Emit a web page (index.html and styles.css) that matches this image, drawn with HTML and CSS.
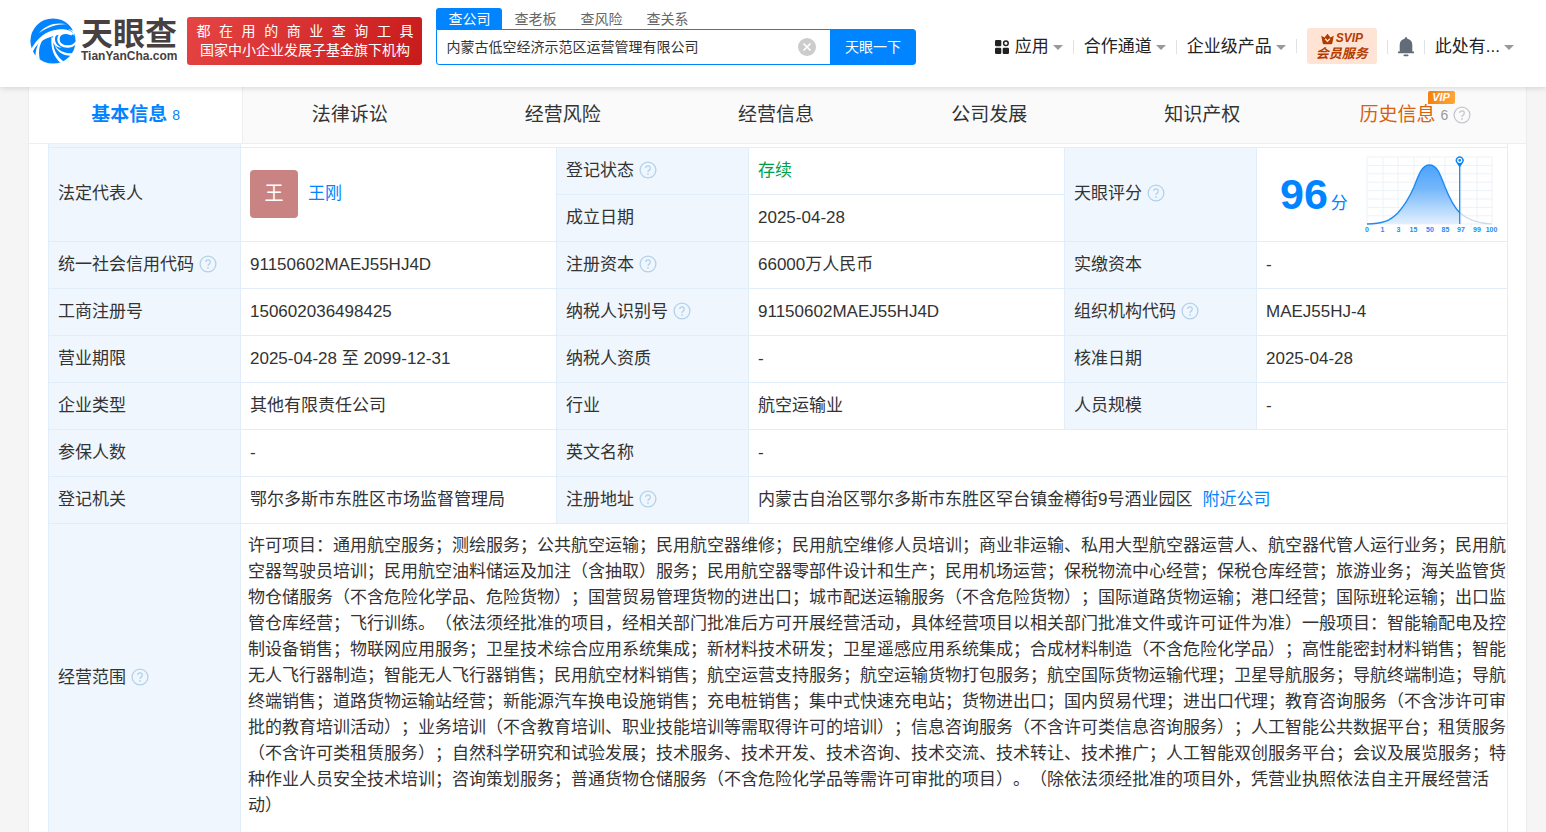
FILE: index.html
```html
<!DOCTYPE html>
<html lang="zh-CN">
<head>
<meta charset="utf-8">
<meta name="viewport" content="width=device-width, initial-scale=1">
<title>天眼查</title>
<link rel="stylesheet" href="styles.css">
</head>
<body>
<svg class="sprite" aria-hidden="true">
  <symbol id="help" viewBox="0 0 18 18">
    <circle cx="9" cy="9" r="7.9" fill="none" stroke="currentColor" stroke-width="1.3"/>
    <path d="M6.7 7.1a2.3 2.3 0 1 1 3.5 2c-.8.5-1.2.9-1.2 1.8" fill="none" stroke="currentColor" stroke-width="1.3"/>
    <circle cx="9" cy="12.9" r=".85" fill="currentColor"/>
  </symbol>
</svg>

<header class="header">
  <a class="brand" href="#" aria-label="天眼查">
    <svg class="brand-mark" viewBox="0 0 46 46" aria-hidden="true">
      <circle cx="23" cy="23" r="22.600" fill="#0084ff"/>
      <path d="M9 15C16 7 25 4 37 6.300 27 5.800 18 9 9 15Z" fill="#fff"/>
      <path d="M0 33C7 20 16 12.500 28 11.500c6-.5 12 0 16 4.500l3-3-6-7 2 7c-1.500-1-3-1.800-5-2 4 2 6 4 6.500 7-3.500-3.500-8-4-12-2C23 18 9 20 2.500 34.500Z" fill="#fff"/>
      <path d="M42 16.500c-6-3.500-13-1.500-13.500 4C28 26 33 29 38.500 28.500c4-.3 6.500-2 8-4.500" fill="none" stroke="#fff" stroke-width="2.400"/>
      <path d="M29 15c-2.500 1.500-4 3-4 6 0 4 3 7.500 7 8.500-5 .5-9.500-3-9.500-8.500 0-3 1.500-5 3.500-6.500Z" fill="#fff"/>
      <path d="M23.500 20c-1 9.500 2 17 10 23.500l-3 1.300C23.500 39 20.500 30 21.500 19Z" fill="#fff"/>
      <path d="M24.500 26.500c3.500 6 9 9 18 8.800l-1.600 2.500C32.500 37.500 26.500 33.500 24.500 26.500Z" fill="#fff"/>
      <path d="M16 17.500C9.500 24.500 8 32 9.800 41.500L5.500 38C5.500 29 9.500 22 16 17.500Z" fill="#fff"/>
    </svg>
    <span class="brand-text">
      <span class="brand-name">天眼查</span>
      <span class="brand-domain">TianYanCha.com</span>
    </span>
  </a>
  <div class="slogan">
    <span class="slogan-spread">都 在 用 的 商 业 查 询 工 具</span>
    <span>国家中小企业发展子基金旗下机构</span>
  </div>
  <form class="search">
    <div class="search-tabs">
      <button type="button" class="search-tab is-active">查公司</button>
      <button type="button" class="search-tab">查老板</button>
      <button type="button" class="search-tab">查风险</button>
      <button type="button" class="search-tab">查关系</button>
    </div>
    <div class="search-bar">
      <input class="search-input" type="text" aria-label="搜索公司" value="内蒙古低空经济示范区运营管理有限公司">
      <button type="button" class="search-clear" aria-label="清空">
        <svg viewBox="0 0 18 18" aria-hidden="true"><circle cx="9" cy="9" r="9" fill="#ccc"/><path d="M5.500 5.500l7 7M12.500 5.500l-7 7" stroke="#fff" stroke-width="1.700"/></svg>
      </button>
      <button type="button" class="search-submit">天眼一下</button>
    </div>
  </form>
  <nav class="menu">
    <a class="menu-item" href="#">
      <svg class="apps-icon" viewBox="0 0 14 14" aria-hidden="true"><rect width="6.300" height="6.300" rx="1.200" fill="#222"/><rect y="7.700" width="6.300" height="6.300" rx="1.200" fill="#222"/><rect x="7.700" y="7.700" width="6.300" height="6.300" rx="1.200" fill="#222"/><circle cx="10.900" cy="3.200" r="2.300" fill="none" stroke="#222" stroke-width="1.500"/></svg>
      <span>应用</span><i class="caret"></i>
    </a>
    <a class="menu-item" href="#"><span>合作通道</span><i class="caret"></i></a>
    <a class="menu-item" href="#"><span>企业级产品</span><i class="caret"></i></a>
    <a class="menu-item" href="#">
      <span class="svip">
        <span class="svip-top">
          <svg class="crown" viewBox="0 0 14 12" aria-hidden="true"><path d="M.3 2.500 3.800 4.300 7 .3l3.200 4 3.500-1.800-1.500 8q-.2 1.200-1.300 1.200H3.100q-1.100 0-1.300-1.200Z" fill="#b23c00"/><path d="M4.500 5.800 7 8.500l2.500-2.700" fill="none" stroke="#ffe3d4" stroke-width="1.500"/></svg>
          <span>SVIP</span>
        </span>
        <span>会员服务</span>
      </span>
    </a>
    <a class="menu-item" href="#" aria-label="消息">
      <svg class="bell" viewBox="0 0 16 20" aria-hidden="true"><path d="M8 .3c.8 0 1.300.5 1.300 1.400 3 .6 5 2.900 5 6V14.500H16v1.800H0v-1.800H1.700V7.700c0-3.100 2-5.400 5-6C6.700.8 7.200.3 8 .3Z" fill="#626b78"/><rect x="5.500" y="17.600" width="5" height="1.700" rx=".8" fill="#626b78"/></svg>
    </a>
    <a class="menu-item" href="#"><span>此处有...</span><i class="caret"></i></a>
  </nav>
</header>

<main class="page">
  <nav class="tabs">
    <a class="tab is-active" href="#">基本信息<span class="count">8</span></a>
    <a class="tab" href="#">法律诉讼</a>
    <a class="tab" href="#">经营风险</a>
    <a class="tab" href="#">经营信息</a>
    <a class="tab" href="#">公司发展</a>
    <a class="tab" href="#">知识产权</a>
    <a class="tab is-history" href="#">
      <span class="history-label">历史信息<span class="vip">VIP</span></span><span class="count">6</span>
      <svg class="help" aria-hidden="true"><use href="#help"/></svg>
    </a>
  </nav>

  <table class="info">
    <colgroup>
      <col class="col-label"><col class="col-value"><col class="col-label"><col class="col-value"><col class="col-label"><col class="col-last">
    </colgroup>
    <tbody>
      <tr class="lead" aria-hidden="true"><th></th><td colspan="5"></td></tr>
      <tr>
        <th rowspan="2" scope="row">法定代表人</th>
        <td rowspan="2"><div class="person"><span class="avatar">王</span><a class="link" href="#">王刚</a></div></td>
        <th scope="row">登记状态<svg class="help" aria-hidden="true"><use href="#help"/></svg></th>
        <td class="status">存续</td>
        <th rowspan="2" scope="row">天眼评分<svg class="help" aria-hidden="true"><use href="#help"/></svg></th>
        <td rowspan="2">
          <div class="score">
            <span class="score-value"><b>96</b>分</span>
            <svg class="chart" viewBox="0 0 136 84" role="img" aria-label="评分分布">
              <defs><linearGradient id="fill" x1="0" y1="0" x2="0" y2="1"><stop offset="0" stop-color="#4aa3fb"/><stop offset=".4" stop-color="#74b7fb"/><stop offset="1" stop-color="#e3f0fd"/></linearGradient></defs>
              <path d="M5 5H130M5 13.400H130M5 21.800H130M5 30.200H130M5 38.600H130M5 47H130M5 55.400H130M5 63.800H130M5 72H130M5 5V72M21 5V72M36 5V72M52 5V72M67.500 5V72M83 5V72M99 5V72M115 5V72M130 5V72" stroke="#edf2f8" fill="none"/>
              <path d="M5 72C20 72 28 69 36 60.700 44 52 48 44 52 35 57 22 60 13 67.500 13S78 22 83 35C87 45 91 54 97.700 60.700V72Z" fill="url(#fill)"/>
              <path d="M97.700 60.700C106 68 115 71.500 130 72" fill="none" stroke="#cbdbea" stroke-width="1.200"/>
              <path d="M5 72C20 72 28 69 36 60.700 44 52 48 44 52 35 57 22 60 13 67.500 13S78 22 83 35C87 45 91 54 97.700 60.700" fill="none" stroke="#1e8bf5" stroke-width="1.400"/>
              <path d="M97.700 10V72" stroke="#0a84f5" stroke-width="1.200"/>
              <path d="M97.700 15.500 94.600 11a4 4 0 1 1 6.200 0Z" fill="#0a84f5"/>
              <circle cx="97.700" cy="8.300" r="2" fill="#0a84f5" stroke="#fff" stroke-width="1.200"/>
              <g class="axis"><text x="5" y="80">0</text><text x="20.500" y="80">1</text><text x="36.500" y="80">3</text><text x="51.500" y="80">15</text><text x="68" y="80">50</text><text x="83.500" y="80">85</text><text x="99" y="80">97</text><text x="115" y="80">99</text><text x="129.500" y="80">100</text></g>
            </svg>
          </div>
        </td>
      </tr>
      <tr>
        <th scope="row">成立日期</th><td>2025-04-28</td>
      </tr>
      <tr>
        <th scope="row">统一社会信用代码<svg class="help" aria-hidden="true"><use href="#help"/></svg></th><td>91150602MAEJ55HJ4D</td>
        <th scope="row">注册资本<svg class="help" aria-hidden="true"><use href="#help"/></svg></th><td>66000万人民币</td>
        <th scope="row">实缴资本</th><td>-</td>
      </tr>
      <tr>
        <th scope="row">工商注册号</th><td>150602036498425</td>
        <th scope="row">纳税人识别号<svg class="help" aria-hidden="true"><use href="#help"/></svg></th><td>91150602MAEJ55HJ4D</td>
        <th scope="row">组织机构代码<svg class="help" aria-hidden="true"><use href="#help"/></svg></th><td>MAEJ55HJ-4</td>
      </tr>
      <tr>
        <th scope="row">营业期限</th><td>2025-04-28 至 2099-12-31</td>
        <th scope="row">纳税人资质</th><td>-</td>
        <th scope="row">核准日期</th><td>2025-04-28</td>
      </tr>
      <tr>
        <th scope="row">企业类型</th><td>其他有限责任公司</td>
        <th scope="row">行业</th><td>航空运输业</td>
        <th scope="row">人员规模</th><td>-</td>
      </tr>
      <tr>
        <th scope="row">参保人数</th><td>-</td>
        <th scope="row">英文名称</th><td colspan="3">-</td>
      </tr>
      <tr>
        <th scope="row">登记机关</th><td>鄂尔多斯市东胜区市场监督管理局</td>
        <th scope="row">注册地址<svg class="help" aria-hidden="true"><use href="#help"/></svg></th>
        <td colspan="3">内蒙古自治区鄂尔多斯市东胜区罕台镇金樽街9号酒业园区<a class="link nearby" href="#">附近公司</a></td>
      </tr>
      <tr>
        <th scope="row">经营范围<svg class="help" aria-hidden="true"><use href="#help"/></svg></th>
        <td colspan="5" class="scope">许可项目：通用航空服务；测绘服务；公共航空运输；民用航空器维修；民用航空维修人员培训；商业非运输、私用大型航空器运营人、航空器代管人运行业务；民用航空器驾驶员培训；民用航空油料储运及加注（含抽取）服务；民用航空器零部件设计和生产；民用机场运营；保税物流中心经营；保税仓库经营；旅游业务；海关监管货物仓储服务（不含危险化学品、危险货物）；国营贸易管理货物的进出口；城市配送运输服务（不含危险货物）；国际道路货物运输；港口经营；国际班轮运输；出口监管仓库经营；飞行训练。（依法须经批准的项目，经相关部门批准后方可开展经营活动，具体经营项目以相关部门批准文件或许可证件为准）一般项目：智能输配电及控制设备销售；物联网应用服务；卫星技术综合应用系统集成；新材料技术研发；卫星遥感应用系统集成；合成材料制造（不含危险化学品）；高性能密封材料销售；智能无人飞行器制造；智能无人飞行器销售；民用航空材料销售；航空运营支持服务；航空运输货物打包服务；航空国际货物运输代理；卫星导航服务；导航终端制造；导航终端销售；道路货物运输站经营；新能源汽车换电设施销售；充电桩销售；集中式快速充电站；货物进出口；国内贸易代理；进出口代理；教育咨询服务（不含涉许可审批的教育培训活动）；业务培训（不含教育培训、职业技能培训等需取得许可的培训）；信息咨询服务（不含许可类信息咨询服务）；人工智能公共数据平台；租赁服务（不含许可类租赁服务）；自然科学研究和试验发展；技术服务、技术开发、技术咨询、技术交流、技术转让、技术推广；人工智能双创服务平台；会议及展览服务；特种作业人员安全技术培训；咨询策划服务；普通货物仓储服务（不含危险化学品等需许可审批的项目）。（除依法须经批准的项目外，凭营业执照依法自主开展经营活动）</td>
      </tr>
    </tbody>
  </table>
</main>
</body>
</html>
```

FILE: styles.css
```css
* {
  box-sizing: border-box;
}

body {
  margin: 0;
  background: #f5f5f5;
  color: #333;
  font: 17px/26px "Liberation Sans", "Noto Sans CJK SC", sans-serif;
}

a {
  color: inherit;
  text-decoration: none;
}

button,
input {
  margin: 0;
  padding: 0;
  border: 0;
  background: none;
  color: inherit;
  font: inherit;
}

.sprite {
  position: absolute;
  width: 0;
  height: 0;
}

/* Header */

.header {
  position: relative;
  z-index: 2;
  display: flex;
  align-items: flex-start;
  padding: 8px 32px 22px 30px;
  background: #fff;
  box-shadow: 0 1px 6px rgba(0, 0, 0, 0.15);
}

.brand {
  display: flex;
  align-items: center;
  gap: 5px;
  margin-top: 10px;
  color: #483f40;
}

.brand-mark {
  width: 46px;
  height: 46px;
}

.brand-text {
  display: flex;
  flex-direction: column;
}

.brand-name {
  font-size: 32px;
  font-weight: 700;
  line-height: 30px;
}

.brand-domain {
  font-size: 12px;
  font-weight: 700;
  line-height: 14px;
}

.slogan {
  display: flex;
  flex-direction: column;
  width: 235px;
  margin: 9px 14px 0 10px;
  padding: 5px 9px;
  border-radius: 3px;
  background: linear-gradient(120deg, #e64545, #c81a1a);
  color: #fff;
  font-size: 14px;
  line-height: 19px;
  text-align: center;
  white-space: nowrap;
}

.slogan-spread {
  text-align-last: justify;
}

.search {
  width: 480px;
  font-size: 14px;
  line-height: 20px;
}

.search-tabs {
  display: flex;
}

.search-tab {
  width: 66px;
  height: 21px;
  border-radius: 3px 3px 0 0;
  color: #666;
}

.search-tab.is-active {
  background: #0084ff;
  color: #fff;
}

.search-bar {
  display: flex;
  align-items: center;
  height: 36px;
  border: 1px solid #0084ff;
  border-radius: 0 3px 3px 3px;
}

.search-input {
  flex: 1;
  min-width: 0;
  padding-left: 9px;
  outline: none;
}

.search-clear {
  width: 18px;
  height: 18px;
  margin: 0 14px;
}

.search-clear svg {
  display: block;
}

.search-submit {
  align-self: stretch;
  width: 85px;
  background: #0084ff;
  color: #fff;
}

.menu {
  display: flex;
  align-items: center;
  height: 36px;
  margin: 20px 0 0 auto;
  color: #222;
  white-space: nowrap;
}

.menu-item {
  display: flex;
  align-items: center;
  height: 36px;
  padding-top: 2px;
}

.menu-item:has(.svip) {
  padding-top: 0;
}

.menu-item + .menu-item::before {
  width: 1px;
  height: 14px;
  margin: 0 10px;
  background: #dfe3e8;
  content: "";
}

.caret {
  margin-left: 4px;
  border: 5px solid transparent;
  border-top-color: #999;
  border-bottom: 0;
}

.apps-icon {
  width: 14px;
  height: 14px;
  margin-right: 6px;
}

.bell {
  width: 16px;
  height: 20px;
}

.svip {
  display: flex;
  flex-direction: column;
  align-items: center;
  width: 70px;
  padding: 3px 0;
  border-radius: 3px;
  background: #ffe3d4;
  color: #b23c00;
  font-size: 13px;
  font-style: italic;
  font-weight: 700;
  line-height: 15px;
}

.svip-top {
  display: flex;
  align-items: center;
  gap: 2px;
}

.svip-top span {
  font-size: 12px;
}

.crown {
  width: 13px;
  height: 12px;
}

/* Section tabs */

.page {
  min-height: calc(100vh - 87px);
  margin: 0 19px 0 28px;
  border: solid #ececec;
  border-width: 0 1px;
  background: #fff;
}

.tabs {
  display: flex;
  padding-right: 4px;
  border-bottom: 1px solid #eee;
  background: #fafafa;
}

.tab {
  display: flex;
  flex: 1;
  align-items: center;
  justify-content: center;
  height: 56px;
  font-size: 19px;
}

.tab.is-active {
  border-right: 1px solid #eee;
  background: #fff;
  color: #0084ff;
  font-weight: 700;
}

.count {
  margin-left: 5px;
  font-size: 14px;
  font-weight: 400;
}

.is-history {
  color: #d9600c;
}

.is-history .count {
  color: #999;
}

.is-history .help {
  color: #c4c7cc;
}

.history-label {
  position: relative;
}

.vip {
  position: absolute;
  top: -11px;
  right: -19px;
  width: 27px;
  border-radius: 2px 2px 2px 0;
  background: linear-gradient(90deg, #f5820a, #ffa63c);
  color: #fff;
  font-size: 11px;
  font-style: italic;
  font-weight: 700;
  line-height: 13px;
  text-align: center;
}

/* Company details */

.help {
  width: 18px;
  height: 18px;
  margin-left: 5px;
  color: #b3d1ea;
  vertical-align: -3px;
}

.info {
  width: calc(100% - 37px);
  margin: 0 18px 0 19px;
  border-collapse: collapse;
  table-layout: fixed;
}

.col-label {
  width: 192px;
}

.col-value {
  width: 316px;
}

.info th,
.info td {
  height: 47px;
  padding: 0 9px;
  border: 1px solid #e1edf8;
  text-align: left;
}

.info th {
  background: #eff6fd;
  font-weight: 400;
}

.info .lead th,
.info .lead td {
  height: 3px;
  border-top: 0;
}

.info .scope {
  padding: 9px 0 14px 7px;
  line-height: 26px;
  text-spacing-trim: space-all;
}

.person {
  display: flex;
  align-items: center;
  gap: 10px;
}

.avatar {
  width: 48px;
  border-radius: 4px;
  background: #c98383;
  color: #fff;
  font-size: 19px;
  line-height: 48px;
  text-align: center;
}

.link {
  color: #0084ff;
}

.nearby {
  margin-left: 10px;
}

.status {
  color: #00a04a;
}

.score {
  display: flex;
  align-items: center;
  justify-content: space-between;
}

.score-value {
  padding-left: 14px;
  color: #0084ff;
  white-space: nowrap;
}

.score-value b {
  margin-right: 3px;
  font-size: 43px;
  line-height: 48px;
}

.chart {
  width: 136px;
  height: 84px;
}

.axis {
  fill: #1e8bf5;
  font-size: 7px;
  font-weight: 700;
  text-anchor: middle;
}
```
